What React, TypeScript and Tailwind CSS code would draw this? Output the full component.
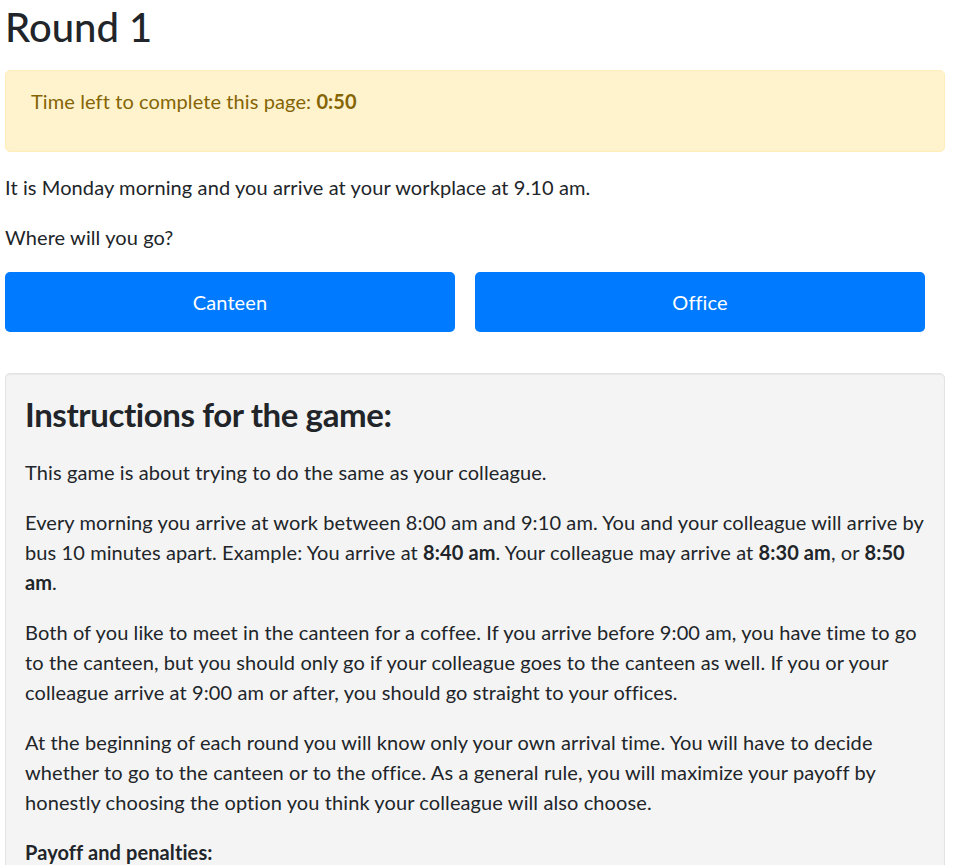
export default function App() {
  return (
    <div
      className="pl-[5px] pr-[10px] text-[20px] leading-[30px] tracking-[0.1px] text-[#212529] bg-white min-h-screen"
      style={{ fontFamily: "Lato, 'Noto Sans', sans-serif" }}
    >
      <h2 className="text-[40px] leading-[48px] font-medium tracking-normal pt-[3px] mb-[19px]">Round 1</h2>
      <div className="border border-[#ffeeba] bg-[#fff3cd] text-[#856404] rounded-[5px] px-[25px] py-[15px] mb-[20px]">
        <p className="mb-[20px]">
          Time left to complete this page: <b className="font-bold">0:50</b>
        </p>
      </div>
      <p className="mb-[20px]">It is Monday morning and you arrive at your workplace at 9.10 am.</p>
      <p className="mb-[20px]">Where will you go?</p>
      <div className="flex gap-[20px] mb-[41px]">
        <button className="w-[450px] h-[60px] rounded-[5px] bg-[#007bff] text-white text-[20px]">Canteen</button>
        <button className="w-[450px] h-[60px] rounded-[5px] bg-[#007bff] text-white text-[20px]">Office</button>
      </div>
      <div className="border border-[#e3e3e3] bg-[#f4f4f4] rounded-[5px] p-[19px] shadow-[inset_0_1px_1px_rgba(0,0,0,0.05)]">
        <h3 className="text-[33px] leading-[42px] font-bold tracking-[-0.4px] mb-[22px]">Instructions for the game:</h3>
        <p className="mb-[20px]">This game is about trying to do the same as your colleague.</p>
        <p className="mb-[20px]">
          Every morning you arrive at work between 8:00 am and 9:10 am. You and your colleague will arrive by bus 10
          minutes apart. Example: You arrive at <b>8:40 am</b>. Your colleague may arrive at <b>8:30 am</b>, or{" "}
          <b>8:50 am</b>.
        </p>
        <p className="mb-[20px]">
          Both of you like to meet in the canteen for a coffee. If you arrive before 9:00 am, you have time to go to
          the canteen, but you should only go if your colleague goes to the canteen as well. If you or your colleague
          arrive at 9:00 am or after, you should go straight to your offices.
        </p>
        <p className="mb-[20px]">
          At the beginning of each round you will know only your own arrival time. You will have to decide whether to
          go to the canteen or to the office. As a general rule, you will maximize your payoff by honestly choosing
          the option you think your colleague will also choose.
        </p>
        <p className="mb-[20px]">
          <b>Payoff and penalties:</b>
        </p>
        <p className="mb-[20px]">
          If you and your colleague both go to the canteen, you each earn a payoff. If only one of you goes to the
          canteen, that person receives a penalty.
        </p>
      </div>
    </div>
  );
}
